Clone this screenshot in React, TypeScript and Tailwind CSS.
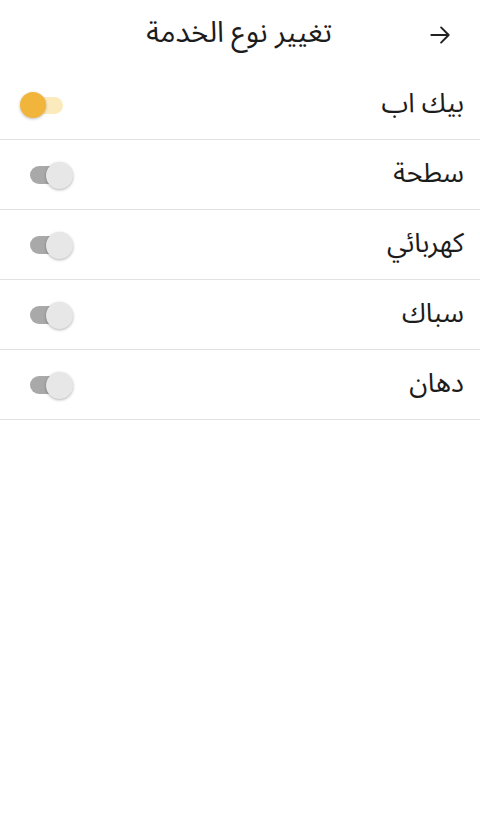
import { useState } from "react";

const services = ["بيك اب", "سطحة", "كهربائي", "سباك", "دهان"];

function Toggle({ on, onClick }: { on: boolean; onClick: () => void }) {
  return (
    <button
      onClick={onClick}
      className="relative h-[28px] w-[46px] shrink-0"
      aria-pressed={on}
    >
      <span
        className={
          on
            ? "absolute left-[6px] top-[6px] h-[17px] w-[31px] rounded-full bg-[#fbeabc]"
            : "absolute left-[4px] top-[5px] h-[18px] w-[31px] rounded-full bg-[#a9a9a9]"
        }
      />
      <span
        className={
          on
            ? "absolute left-[-6px] top-[1px] h-[26px] w-[26px] rounded-full bg-[#f2b53c] shadow-[0_1px_3px_rgba(0,0,0,0.25)]"
            : "absolute left-[20px] top-[1px] h-[27px] w-[27px] rounded-full bg-[#e7e7e7] shadow-[0_1px_3px_rgba(0,0,0,0.3)]"
        }
      />
    </button>
  );
}

export default function App() {
  const [active, setActive] = useState(0);

  return (
    <div
      dir="rtl"
      className="min-h-[831px] w-full bg-white text-[#1c1c1c]"
      style={{ fontFamily: '"Noto Sans Arabic", "DejaVu Sans", Roboto, sans-serif' }}
    >
      <header className="flex h-[70px] items-center pr-[27px]">
        <button className="flex h-[26px] w-[26px] items-center justify-center text-[#222]">
          <svg width="26" height="26" viewBox="0 0 24 24" fill="none" stroke="currentColor" strokeWidth="1.8" strokeLinecap="round" strokeLinejoin="round">
            <path d="M4 12h16M13 5l7 7-7 7" />
          </svg>
        </button>
        <h1 className="mr-[95px] pb-[4px] text-[29px] font-normal">تغيير نوع الخدمة</h1>
      </header>

      <ul>
        {services.map((name, i) => (
          <li
            key={name}
            className="flex h-[70px] items-center justify-between border-b border-[#e2e2e2] pl-[26px] pr-[16px]"
          >
            <span className="pb-[1px] text-[27px]">{name}</span>
            <Toggle on={active === i} onClick={() => setActive(i)} />
          </li>
        ))}
      </ul>
    </div>
  );
}
